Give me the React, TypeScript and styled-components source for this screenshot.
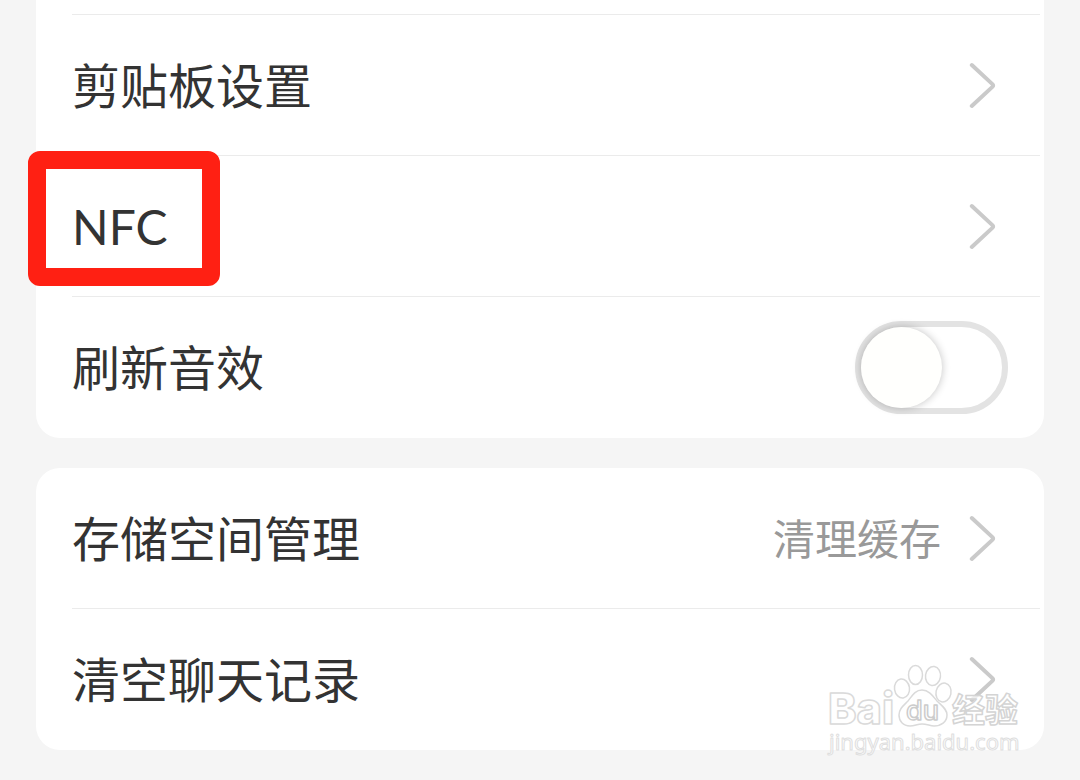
import React from "react";
import styled, { createGlobalStyle } from "styled-components";

const GlobalStyle = createGlobalStyle`
  *, *::before, *::after {
    box-sizing: border-box;
  }

  body {
    margin: 0;
    background: #f5f5f5;
    color: #333333;
    font-family: Lato, "Noto Sans CJK SC", sans-serif;
  }
`;

const Page = styled.main`
  position: relative;
  display: flex;
  flex-direction: column;
  gap: 30px;
  padding: 0 36px 30px;
`;

const Card = styled.section<{ $continued?: boolean }>`
  display: flex;
  flex-direction: column;
  padding: ${({ $continued }) => ($continued ? "14px 4px 1px 36px" : "0 4px 1px 36px")};
  border-radius: ${({ $continued }) => ($continued ? "0 0 24px 24px" : "24px")};
  background: #ffffff;
`;

const Item = styled.div<{ $divided?: boolean }>`
  border-top: ${({ $divided }) => ($divided ? "1px solid #ebebeb" : "none")};
`;

const LinkRow = styled.button`
  display: flex;
  align-items: center;
  gap: 28px;
  width: 100%;
  height: 140px;
  padding: 0 43px 0 0;
  border: 0;
  background: none;
  color: inherit;
  font: inherit;
  text-align: left;
  cursor: pointer;
`;

const SwitchRow = styled.label`
  display: flex;
  align-items: center;
  height: 140px;
  padding-right: 32px;
  cursor: pointer;
`;

const Title = styled.span`
  position: relative;
  flex: 1;
  padding-top: 2px;
  font-size: 48px;
  line-height: 72px;
`;

const Hint = styled.span`
  padding-top: 2px;
  color: #999999;
  font-size: 42px;
  line-height: 64px;
`;

const Highlight = styled.span`
  position: absolute;
  top: -38px;
  left: -44px;
  width: 192px;
  height: 135px;
  border: 18px solid #ff2013;
  border-radius: 12px;
  pointer-events: none;
`;

const Arrow = styled.svg`
  flex: none;
  width: 28px;
  height: 48px;
`;

const Switch = styled.input`
  appearance: none;
  display: flex;
  flex: none;
  width: 153px;
  height: 93px;
  margin: 0;
  border: 6px solid #e3e3e3;
  border-radius: 47px;
  background: #ffffff;
  cursor: pointer;

  &::before {
    content: "";
    width: 81px;
    height: 81px;
    border-radius: 50%;
    background: #fffffd;
    box-shadow: 0 0 8px rgba(0, 0, 0, 0.24);
  }

  &:checked {
    justify-content: flex-end;
    border-color: #34c759;
    background: #34c759;
  }
`;

const Watermark = styled.svg`
  position: absolute;
  right: 54px;
  bottom: 20px;
  width: 204px;
  height: 100px;
  pointer-events: none;
`;

function Chevron() {
  return (
    <Arrow viewBox="0 0 28 48" aria-hidden="true">
      <path
        d="M2.8 4 23.4 23.1Q24.9 24.5 23.4 25.9L2.8 45"
        fill="none"
        stroke="#cacaca"
        strokeWidth="4"
        strokeLinecap="round"
        strokeLinejoin="round"
      />
    </Arrow>
  );
}

type RowProps = {
  title: string;
  hint?: string;
  divided?: boolean;
  highlighted?: boolean;
};

function Row({ title, hint, divided, highlighted }: RowProps) {
  return (
    <Item $divided={divided}>
      <LinkRow type="button">
        <Title>
          {title}
          {highlighted && <Highlight />}
        </Title>
        {hint && <Hint>{hint}</Hint>}
        <Chevron />
      </LinkRow>
    </Item>
  );
}

function BaiduMark() {
  return (
    <Watermark viewBox="0 0 204 100">
      <g
        fill="#ffffff"
        fillOpacity="0.7"
        stroke="#dadada"
        strokeWidth="1.5"
        strokeLinejoin="round"
      >
        <text x="6" y="64" fontFamily="Inter, sans-serif" fontSize="43" fontWeight="800">
          Bai
        </text>
        <ellipse cx="80" cy="28.5" rx="7.5" ry="9.5" transform="rotate(-8 80 28.5)" />
        <ellipse cx="93.5" cy="15" rx="7" ry="9.5" />
        <ellipse cx="111" cy="16" rx="7.5" ry="9.5" transform="rotate(8 111 16)" />
        <ellipse cx="121.5" cy="32.5" rx="7.5" ry="9.5" transform="rotate(12 121.5 32.5)" />
        <path d="M100 30C107 30 111 36 115 41C120 46 125 49 125 55C125 62 119 66 112 66C108 66 105 64 100 64C95 64 93 66 88 66C81 66 77 61 77 55C77 49 81 46 86 41C90 36 93 30 100 30Z" />
        <text
          x="84"
          y="60"
          fontFamily="Inter, sans-serif"
          fontSize="27"
          fontWeight="500"
          stroke="#cccccc"
        >
          du
        </text>
        <text
          x="130"
          y="62"
          fontFamily="'Noto Sans CJK SC', sans-serif"
          fontSize="33"
          fontWeight="700"
          stroke="#d4d4d4"
        >
          经验
        </text>
        <text
          x="7"
          y="90"
          fontFamily="'Noto Sans', sans-serif"
          fontSize="22"
          strokeWidth="1"
          stroke="#dedede"
        >
          jingyan.baidu.com
        </text>
      </g>
    </Watermark>
  );
}

export default function App() {
  return (
    <>
      <GlobalStyle />
      <Page>
        <Card $continued>
          <Row title="剪贴板设置" divided />
          <Row title="NFC" divided highlighted />
          <Item $divided>
            <SwitchRow htmlFor="refresh-sound">
              <Title>刷新音效</Title>
              <Switch id="refresh-sound" type="checkbox" role="switch" />
            </SwitchRow>
          </Item>
        </Card>
        <Card>
          <Row title="存储空间管理" hint="清理缓存" />
          <Row title="清空聊天记录" divided />
        </Card>
        <BaiduMark />
      </Page>
    </>
  );
}
